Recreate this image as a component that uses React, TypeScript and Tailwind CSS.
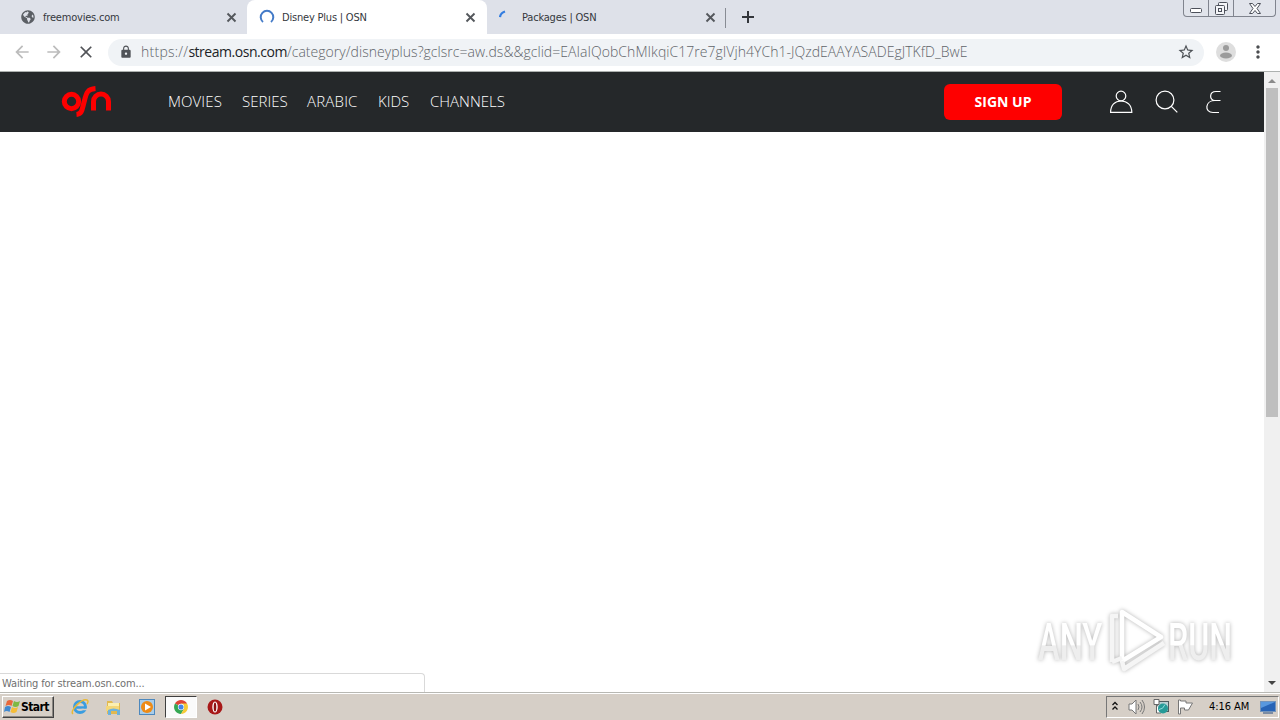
import React from "react";
import { FaGlobeAmericas } from "react-icons/fa";
import { MdArrowBack, MdArrowForward, MdClose, MdLock, MdStarBorder, MdMoreVert } from "react-icons/md";

function Tab({ title, icon, active = false }: { title: string; icon: React.ReactNode; active?: boolean }) {
  return (
    <div
      className={
        active
          ? "flex h-[34px] w-[240px] items-center rounded-t-lg bg-white pr-[10px] pl-[12px]"
          : "flex h-[34px] w-[239px] items-center pr-[9px] pl-[12px]"
      }
    >
      <span className="flex h-4 w-4 items-center justify-center">{icon}</span>
      <span className="ml-[7px] flex-1 pt-[2px] text-[11px] tracking-[-0.2px] whitespace-nowrap text-[#35383d]">{title}</span>
      <svg className="mr-px" width="11" height="11" stroke="#54575c" strokeWidth="1.900">
        <path d="M1.500 1.500l8 8M9.500 1.500l-8 8" />
      </svg>
    </div>
  );
}

function WindowButtons() {
  return (
    <div className="flex h-[17px] w-[93px] rounded-b border border-t-0 border-[#80848e] bg-[#e1e4eb] text-[#4c505a]">
      <div className="flex w-[25px] items-end justify-center border-r border-[#80848e] pb-[3px]">
        <svg width="12" height="5" fill="#fff" stroke="currentColor">
          <rect x="0.5" y="0.5" width="11" height="4" rx="1" />
        </svg>
      </div>
      <div className="flex w-[25px] items-center justify-center border-r border-[#80848e]">
        <svg width="13" height="13" fill="#f4f5f8" stroke="currentColor">
          <rect x="3.5" y="0.5" width="9" height="8" rx="1" />
          <rect x="0.5" y="3.5" width="9" height="9" rx="1" />
          <rect x="3.5" y="6.5" width="3" height="3" />
        </svg>
      </div>
      <div className="flex flex-1 items-center justify-center">
        <svg width="12" height="11" fill="#fff" stroke="currentColor">
          <path d="M.5.5h3L6 3.500 8.500.5h3L8 5.500l3.500 5h-3L6 7.500l-2.500 3h-3L4 5.500z" />
        </svg>
      </div>
    </div>
  );
}

function TabStrip() {
  return (
    <div className="flex h-[34px] bg-[#dee1e9] pl-2">
      <Tab title="freemovies.com" icon={<FaGlobeAmericas className="h-[14px] w-[14px] text-[#5b5f65]" />} />
      <Tab
        active
        title="Disney Plus | OSN"
        icon={
          <svg width="16" height="16" fill="none" stroke="#447bc8" strokeWidth="2">
            <path d="M4 13A6.300 6.300 0 1 1 12 13" />
          </svg>
        }
      />
      <Tab
        title="Packages | OSN"
        icon={
          <svg width="16" height="16" fill="none" stroke="#337de0" strokeWidth="2.200">
            <path d="M1 8Q1.500 4 6 2.500" />
          </svg>
        }
      />
      <div className="mt-[8px] -ml-px h-5 w-px bg-[#888c94]" />
      <svg className="mt-[11px] ml-[16px]" width="12" height="12" stroke="#33363b" strokeWidth="2">
        <path d="M6 0v12M0 6h12" />
      </svg>
      <div className="mr-1 ml-auto">
        <WindowButtons />
      </div>
    </div>
  );
}

function Toolbar() {
  return (
    <div className="flex h-[38px] items-center border-b border-[#adb1af] bg-white pb-px pl-[12px]">
      <MdArrowBack className="h-5 w-5 text-[#bcbcbc]" />
      <MdArrowForward className="ml-3 h-5 w-5 text-[#bcbcbc]" />
      <MdClose className="ml-3 h-5 w-5 text-[#515357]" />
      <div className="ml-3 flex h-[27px] w-[1096px] items-center rounded-full bg-[#f0f3f6] pr-[9px] pl-[11px]">
        <MdLock className="h-[14px] w-[14px] text-[#505358]" />
        <span className="ml-2 flex-1 pb-[2px] font-['Open_Sans'] text-[14px] font-light tracking-[0.035px] whitespace-nowrap text-[#5f6469]">
          <span className="tracking-[0.25px]">https://</span>
          <span className="font-normal tracking-[-0.47px] text-[#202327]">stream.osn.com</span>
          /category/disneyplus?gclsrc=aw.ds&amp;&amp;gclid=EAIaIQobChMIkqiC17re7gIVjh4YCh1-JQzdEAAYASADEgJTKfD_BwE
        </span>
        <MdStarBorder className="h-[18px] w-[18px] text-[#4e5257]" />
      </div>
      <svg className="ml-3" width="20" height="20">
        <circle cx="10" cy="10" r="10" fill="#dedede" />
        <circle cx="10" cy="6" r="3" fill="#9b9b9b" />
        <ellipse cx="10" cy="13.500" rx="6" ry="3" fill="#9b9b9b" />
      </svg>
      <MdMoreVert className="ml-3 h-5 w-5 text-[#4b4d50]" />
    </div>
  );
}

const navItems = [
  { label: "MOVIES", className: "w-[74px] tracking-[0.1px]" },
  { label: "SERIES", className: "w-[65px]" },
  { label: "ARABIC", className: "w-[71px] tracking-[0.2px]" },
  { label: "KIDS", className: "w-[52px]" },
  { label: "CHANNELS", className: "w-[80px]" },
];

function SiteHeader() {
  return (
    <header className="flex h-[60px] items-center bg-[#25282a] pl-[61px] text-white">
      <svg width="52" height="34" fill="none" stroke="#fe0000" strokeWidth="5">
        <circle cx="10.500" cy="16.500" r="7.200" />
        <path d="M15.500 29.500C21.500 29 21 24 23.500 15.500C25.500 7 27 4 34.500 3.500" />
        <path d="M32.500 25.500v-9a7.500 7.500 0 0 1 15 0v9" />
      </svg>
      <nav className="ml-[55px] flex pb-[2px] font-['Open_Sans'] text-[15px] font-light">
        {navItems.map((item) => (
          <a key={item.label} className={item.className}>
            {item.label}
          </a>
        ))}
      </nav>
      <button className="ml-[434px] h-9 w-[118px] rounded-md bg-[#fe0000] pb-[2px] font-['Open_Sans'] text-[14px] font-bold">
        SIGN UP
      </button>
      <svg className="ml-12" width="24" height="24" fill="none" stroke="#fff" strokeWidth="1.200">
        <circle cx="11" cy="6" r="4.800" />
        <path d="M.6 22.400C.6 15 5 11 11 11s10.800 4 10.800 11.400z" />
      </svg>
      <svg className="ml-[21px]" width="24" height="24" fill="none" stroke="#fff" strokeWidth="1.200">
        <circle cx="10" cy="10" r="8.900" />
        <path d="M16.300 16.300l6 6" />
      </svg>
      <svg className="ml-[26px]" width="17" height="24" fill="none" stroke="#fff" strokeWidth="1.200">
        <path d="M15.500 1.500H11C4 1.500 4 10.500 10 10.500h5.500M10 10.500C0 10.500-1 22.500 8 22.500h6" />
      </svg>
    </header>
  );
}

function Watermark() {
  return (
    <svg
      className="absolute right-[12px] bottom-[14px] drop-shadow-[0_0_2px_rgba(0,0,0,0.3)]"
      width="220"
      height="74"
      viewBox="0 0 220 74"
    >
      <defs>
        <linearGradient id="fade" x1="0" y1="0" x2="0" y2="1">
          <stop offset="0.55" stopColor="#ffffff" />
          <stop offset="0.56" stopColor="#eeeeee" />
        </linearGradient>
      </defs>
      <g fill="url(#fade)" fontFamily="Roboto, sans-serif" fontSize="51" fontWeight="500">
        <text transform="translate(6 56) scale(0.64 1)">ANY</text>
        <text transform="translate(136 56) scale(0.63 1)">RUN</text>
      </g>
      <g fill="none" stroke="#fff" strokeWidth="4.500" strokeLinejoin="round">
        <path d="M90 8v49l39-24z" />
        <path d="M86 12h-6v46M90 57l2 8 40-26M80 58l10-4" stroke="#f5f5f5" />
      </g>
    </svg>
  );
}

function Scrollbar() {
  return (
    <div className="flex w-4 flex-col items-center bg-[#f0f0f0]">
      <svg width="16" height="16" fill="#8b8b8b">
        <path d="M4 11l4-4 4 4z" />
      </svg>
      <div className="h-[329px] w-3 bg-[#bfbfbf]" />
      <svg className="mt-auto" width="16" height="18" fill="#444">
        <path d="M4 7h8l-4 4z" />
      </svg>
    </div>
  );
}

function StartButton() {
  return (
    <div className="flex h-[22px] w-[52px] items-center border border-t-white border-r-[#424242] border-b-[#424242] border-l-white bg-[#d6cfc7] shadow-[inset_-1px_-1px_#8b8782]">
      <svg className="ml-px" width="17" height="16">
        <path d="M3 2q3-2 6 0L7.500 7Q5 5 1.500 7z" fill="#e9683b" />
        <path d="M10 2q3 2 6 0l-1.500 5q-3 2-6 0z" fill="#7eb943" />
        <path d="M1 8q3-2 6 0l-1.500 5q-3-2-5.500 0z" fill="#4189d0" />
        <path d="M8 8q3 2 6 0l-1.500 5q-3 2-6 0z" fill="#f5bd38" />
      </svg>
      <span className="pt-px text-[12px] font-bold tracking-[-0.55px] text-black">Start</span>
    </div>
  );
}

function Taskbar() {
  return (
    <footer className="flex h-7 items-center border-t border-[#b8b8b3] bg-[#d6cfc7] pl-[2px] shadow-[inset_0_1px_#fff]">
      <StartButton />
      <svg className="ml-[17px]" width="18" height="18" fill="none">
        <circle cx="9" cy="9" r="5.500" stroke="#3a9de0" strokeWidth="3" />
        <path d="M5 9.500h9" stroke="#3a9de0" strokeWidth="2.500" />
        <path d="M10.500 11.500h7" stroke="#d6cfc7" strokeWidth="1.500" />
        <path d="M2 16C-2 13 11 0 16 2q2 1 0 4" stroke="#e9b936" strokeWidth="1.500" />
      </svg>
      <svg className="ml-4" width="18" height="18">
        <path d="M2 3h5l1 2h7v11H2z" fill="#e2b950" />
        <path d="M3 5h11v7H3z" fill="#fbefb0" />
        <path d="M1 8h13v5H1z" fill="#f4d779" />
        <path d="M3 17v-5q5-3 12 0v5h-3v-4H6v4z" fill="#6db2dc" />
      </svg>
      <svg className="ml-4" width="18" height="18">
        <rect x="0.500" y="1.500" width="15" height="15" fill="#a9cde9" stroke="#4d88bd" />
        <circle cx="8" cy="9" r="6" fill="#ee8b16" />
        <path d="M6 5.500l6 3.500-6 3.500z" fill="#fff" />
      </svg>
      <div className="ml-[8px] flex h-[22px] w-[32px] items-center justify-center border border-t-[#3f3f3f] border-r-white border-b-white border-l-[#3f3f3f] bg-[#fafafa]">
        <svg className="-ml-px" width="14" height="14" viewBox="0 0 16 16">
          <path d="M8 8L1.100 4A8 8 0 0 1 14.900 4z" fill="#df4435" />
          <path d="M8 8h0L1.100 4A8 8 0 0 0 8 16l3.500-6z" fill="#36a853" />
          <path d="M8 8V4h6.900A8 8 0 0 1 8 16l3.500-6z" fill="#f6ca36" />
          <circle cx="8" cy="8" r="3.600" fill="#fff" />
          <circle cx="8" cy="8" r="2.900" fill="#4384e8" />
        </svg>
      </div>
      <svg className="ml-[10px]" width="16" height="16">
        <circle cx="8" cy="8" r="7.500" fill="#a81818" />
        <ellipse cx="8" cy="8" rx="2.700" ry="5.500" fill="#fff" />
        <ellipse cx="8" cy="8" rx="1.300" ry="4.500" fill="#8e1111" />
      </svg>
      <Tray />
    </footer>
  );
}

function Tray() {
  return (
    <div className="mr-px ml-auto flex h-[22px] w-[173px] items-center border border-t-[#777] border-r-white border-b-white border-l-[#777] pl-[4px]">
      <svg width="8" height="12" fill="none" stroke="#111" strokeWidth="1.300">
        <path d="M1.500 4L4 1.500 6.500 4M1.500 8.500L4 6l2.500 2.500" />
      </svg>
      <svg className="ml-[9px]" width="17" height="16" fill="none" stroke="#777">
        <path d="M1 5h3l4-4v14l-4-4H1z" fill="#fff" />
        <path d="M10 5q2 3 0 6M12 3q4 5 0 10M14 1q5 7 0 14" />
      </svg>
      <svg className="ml-[8px]" width="17" height="17">
        <rect x="4.500" y="3.500" width="11" height="10" fill="#bad0d4" stroke="#505c60" />
        <path d="M1 1.500h5v5H1zM3.500 6v9H8" fill="#fff" stroke="#666" />
        <circle cx="10" cy="10.500" r="5" fill="#279b98" />
        <path d="M6 11.500q4 0 6-5" stroke="#91dce0" fill="none" />
      </svg>
      <svg className="ml-[7px]" width="18" height="16" fill="#fff" stroke="#777">
        <path d="M1.500 1v14h2V9h4v2h4l4-7H9V2H3.500V1z" />
      </svg>
      <span className="ml-[14px] w-[42px] pt-[2px] text-[11px] tracking-[-0.05px] whitespace-nowrap text-black">4:16 AM</span>
      <svg className="ml-[9px]" width="16" height="14">
        <rect x="0.500" y="1.500" width="15" height="10" fill="#2864b6" stroke="#7394bb" />
        <path d="M1 2h14L1 8z" fill="#5998de" />
        <path d="M3 13h10" stroke="#234a80" />
      </svg>
    </div>
  );
}

export default function App() {
  return (
    <div className="flex h-[720px] w-[1280px] flex-col overflow-hidden bg-white font-['DejaVu_Sans_Condensed','Noto_Sans',sans-serif]">
      <TabStrip />
      <Toolbar />
      <div className="flex h-[620px]">
        <main className="relative flex-1">
          <SiteHeader />
          <Watermark />
          <div className="absolute bottom-0 left-0 flex h-[19px] w-[425px] items-center rounded-tr border-t border-r border-[#d9d9d9] bg-white pt-[2px] pl-[2px] text-[11px] tracking-[-0.12px] text-[#707070]">
            Waiting for stream.osn.com...
          </div>
        </main>
        <Scrollbar />
      </div>
      <Taskbar />
    </div>
  );
}
